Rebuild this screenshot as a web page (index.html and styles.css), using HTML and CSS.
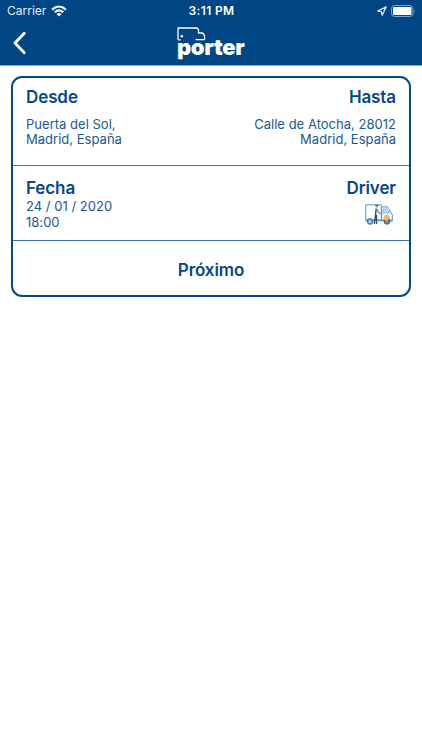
FILE: index.html
```html
<!DOCTYPE html>
<html lang="es">
<head>
<meta charset="utf-8">
<title>Porter</title>
<link rel="stylesheet" href="styles.css">
</head>
<body>
<header class="header">
  <div class="status">
    <div class="carrier"><span class="carrier-name">Carrier</span>
      <svg class="wifi" width="16" height="12" viewBox="0 0 16 12" fill="none" stroke="#fff" stroke-width="2.1"><path d="M1.1 4.6Q8-1.6 14.9 4.6M3.7 7.2Q8 3.4 12.3 7.2"/><path d="M5.5 9Q8 7 10.5 9L8 11.6Z" fill="#fff" stroke="none"/></svg>
    </div>
    <span class="time">3:11 PM</span>
    <div class="indicators">
      <svg width="10" height="10" viewBox="0 0 10 10" fill="none" stroke="#dfeaf5" stroke-width="1.3" stroke-linejoin="round"><path d="M9.2.8.8 5 4.3 5.6 5.2 9.2Z"/></svg>
      <svg width="25" height="12" viewBox="0 0 25 12"><rect x=".5" y=".5" width="21.5" height="11" rx="3.2" fill="none" stroke="#7fa2c8"/><rect x="2" y="2" width="18.5" height="8" rx="1.3" fill="#fff"/><path d="M23.4 4q1.3 2 0 4Z" fill="#7fa2c8"/></svg>
    </div>
  </div>
  <div class="nav">
    <svg class="back" width="14" height="24" viewBox="0 0 14 24" fill="none" stroke="#fff" stroke-width="2.8" stroke-linecap="round" stroke-linejoin="round"><path d="M11.3 2.2 2 12l9.3 9.8"/></svg>
    <div class="logo">
      <svg class="logo-van" width="30" height="16" viewBox="0 0 30 16" fill="none" stroke="#fff" stroke-width="1.3" stroke-linejoin="round"><path d="M1 12.8V1H20L21.5 2.5V6H25.5L27.5 8.3V12.6H18.5M1 12.8H3.5"/><circle cx="4.8" cy="9.3" r="1.3" fill="#fff" stroke="none"/></svg>
      <span class="wordmark">porter</span>
    </div>
  </div>
</header>
<main class="card">
  <section class="row route">
    <div><h2>Desde</h2><p>Puerta del Sol,<br>Madrid, España</p></div>
    <div class="right"><h2>Hasta</h2><p>Calle de Atocha, 28012<br>Madrid, España</p></div>
  </section>
  <section class="row schedule">
    <div><h2>Fecha</h2><p>24 / 01 / 2020<br>18:00</p></div>
    <div class="right"><h2 class="driver">Driver</h2>
      <svg class="truck" width="28" height="21" viewBox="0 0 28 21" fill="none" stroke="#5c9ac5" stroke-width="1">
        <path d="M.7.8H16.4V16.2H.7Z" fill="#fbfdff"/>
        <path d="M16.4 2.8H22Q24.6 4.2 26 8.5L27.4 11V17H16.4Z" fill="#edf6fc"/>
        <path d="M18 5H21.8Q23.7 6 24.4 8.7H18Z" fill="#c5dff0" stroke-width=".6"/>
        <path d="M.7 16.3H27" stroke-width="1.7"/>
        <circle cx="5" cy="17.5" r="2.5" fill="#a9cce4" stroke="#347caf" stroke-width="1.3"/><circle cx="22" cy="17.5" r="2.5" fill="#8395a3" stroke="#3f5b78" stroke-width="1.2"/>
        <path d="M11.2 4.5 10.5 11 9.3 19.8M11.5 11V20" stroke="#3c4c70" stroke-width="1.4"/>
        <path d="M12.2 5.2 13.5 8.5 17.5 10.5" stroke="#5f8cbb" stroke-width="1.2"/>
        <circle cx="11.8" cy="2.5" r="1.3" fill="#d8a58b" stroke="none"/><path d="M10.3 1.4H13.5" stroke="#304667" stroke-width="1"/>
        <path d="M19.2 12 23 10.7 24.9 14.2 21.5 16.6 18.8 15.5Z" fill="#f4b368" stroke="#efad67" stroke-width=".5"/>
      </svg>
    </div>
  </section>
  <button class="next">Próximo</button>
</main>
</body>
</html>
```
FILE: styles.css
```css
* { box-sizing: border-box; }
body {
  margin: 0;
  min-height: 750px;
  background: #fff;
  color: #064789;
  font-family: Inter, "Liberation Sans", sans-serif;
}
.header {
  height: 66px;
  background: #004685;
  border-bottom: 1px solid #7da4d2;
  color: #fff;
}
.status {
  height: 22px;
  padding: 0 6px 0 7px;
  display: grid;
  grid-template-columns: 1fr auto 1fr;
  align-items: center;
}
.carrier, .indicators { display: flex; align-items: center; }
.carrier { gap: 4.5px; }
.carrier-name { font-size: 12px; line-height: 22px; color: #e5eef7; }
.time { font-size: 12px; font-weight: 600; line-height: 22px; letter-spacing: .35px; }
.indicators { justify-content: flex-end; gap: 4px; }
.nav {
  height: 43px;
  padding: 0 13px;
  display: grid;
  grid-template-columns: 1fr 68px 1fr;
}
.back { margin-top: 9px; }
.logo { display: flex; flex-direction: column; height: 43px; }
.logo-van { flex: none; margin: 5px 0 0 -.5px; }
.wordmark {
  margin-top: -8px;
  font-size: 22px;
  font-weight: 900;
  line-height: 24px;
  letter-spacing: -.35px;
}
.card {
  width: 400px;
  height: 221px;
  margin: 10px 0 0 11px;
  border: 2px solid #064789;
  border-radius: 11px;
  display: flex;
  flex-direction: column;
}
.row {
  display: flex;
  justify-content: space-between;
  padding: 0 13px;
  border-bottom: 1px solid #3972a7;
}
.route { height: 88px; padding-top: 8px; }
.schedule { height: 75px; padding-top: 11px; }
.right { text-align: right; }
h2 { margin: 0; font-size: 17px; font-weight: 600; line-height: 22px; letter-spacing: -.1px; }
p { margin: 9px 0 0; font-size: 13px; line-height: 15px; letter-spacing: .02px; color: #205894; }
.schedule p { margin: -1px 0 0; line-height: 16px; }
.truck { display: block; margin: 5px 3px 0 auto; }
.next {
  flex: 1;
  padding: 3px 0 0;
  border: 0;
  background: none;
  color: #064789;
  font: 600 17px/22px Inter, "Liberation Sans", sans-serif;
  letter-spacing: -.1px;
}
```
